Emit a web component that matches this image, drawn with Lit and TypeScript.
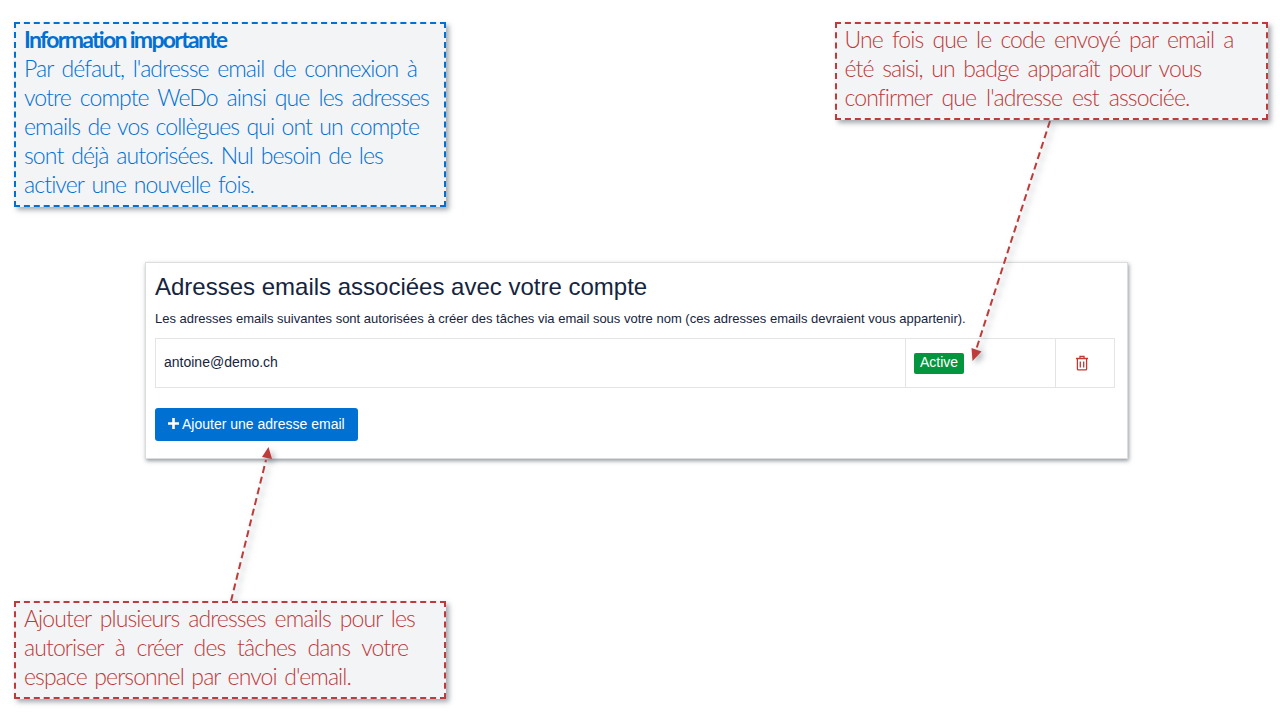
import { LitElement, html, css, svg } from 'lit';
import { customElement, property } from 'lit/decorators.js';

type Line = { text: string; width: number };

@customElement('note-box')
class NoteBox extends LitElement {
  @property() tone = 'red';
  @property() heading = '';
  @property({ type: Array }) lines: Line[] = [];

  static styles = css`
    :host {
      display: block;
      position: absolute;
    }
    .box {
      box-sizing: border-box;
      height: 100%;
      padding: 1px 8px;
      border: 2px dashed;
      background: #f3f4f6;
      box-shadow: 3px 3px 5px rgba(90, 100, 110, 0.55);
      font-family: 'Lato', sans-serif;
      font-size: 23px;
      font-weight: 300;
      line-height: 29px;
      letter-spacing: -0.9px;
      white-space: nowrap;
    }
    .blue {
      border-color: #0070d2;
      color: #0070d2;
    }
    .red {
      border-color: #bd3b3b;
      color: #bd3b3b;
    }
    .line {
      display: block;
      text-align: justify;
      text-align-last: justify;
      white-space: normal;
    }
    .heading {
      font-weight: 700;
      letter-spacing: -1.7px;
      white-space: nowrap;
      text-align-last: auto;
    }
  `;

  render() {
    return html`<div class="box ${this.tone}">
      ${this.heading ? html`<span class="line heading">${this.heading}</span>` : ''}
      ${this.lines.map(l => html`<span class="line" style="width:${l.width}px">${l.text}</span>`)}
    </div>`;
  }
}

@customElement('app-root')
class AppRoot extends LitElement {
  static styles = css`
    :host {
      display: block;
      position: relative;
      width: 1280px;
      height: 720px;
      overflow: hidden;
      background: #fff;
      font-family: 'Liberation Sans', Arial, sans-serif;
    }
    .page {
      padding: 262px 152px 0 145px;
    }
    .card {
      box-sizing: border-box;
      height: 197px;
      padding: 9px 12px 0 9px;
      border: 1px solid #dddddd;
      background: #fff;
      box-shadow: 1px 2px 4px rgba(80, 90, 100, 0.6);
    }
    h2 {
      margin: 0;
      font-size: 24px;
      font-weight: 400;
      line-height: 30px;
      color: #16243d;
    }
    .desc {
      margin: 8px 0 0;
      font-size: 13px;
      line-height: 18px;
      color: #16243d;
    }
    .row {
      display: grid;
      grid-template-columns: 749px 150px 59px;
      height: 50px;
      margin-top: 10px;
      box-sizing: border-box;
      border: 1px solid #e4e4e4;
      color: #16243d;
      font-size: 14px;
    }
    .cell {
      display: flex;
      align-items: center;
      padding-left: 8px;
    }
    .cell + .cell {
      border-left: 1px solid #e4e4e4;
    }
    .email {
      padding-bottom: 2px;
    }
    .icon-cell {
      padding-left: 19px;
    }
    .badge {
      display: inline-block;
      padding: 0 6px;
      height: 21px;
      line-height: 19px;
      border-radius: 2px;
      background: #04963f;
      color: #fff;
      font-size: 14px;
    }
    .add {
      display: flex;
      align-items: center;
      gap: 3px;
      height: 33px;
      margin-top: 20px;
      padding: 0 13px 2px;
      border: 0;
      border-radius: 3px;
      background: #0070d2;
      color: #fff;
      font-family: inherit;
      font-size: 14px;
    }
    .arrows {
      position: absolute;
      inset: 0;
      pointer-events: none;
      filter: drop-shadow(3px 3px 3px rgba(90, 100, 110, 0.55));
    }
  `;

  render() {
    return html`
      <div class="page">
        <section class="card">
          <h2>Adresses emails associées avec votre compte</h2>
          <p class="desc">Les adresses emails suivantes sont autorisées à créer des tâches via email sous votre nom (ces adresses emails devraient vous appartenir).</p>
          <div class="row">
            <div class="cell email">antoine@demo.ch</div>
            <div class="cell"><span class="badge">Active</span></div>
            <div class="cell icon-cell">
              <svg width="14" height="16" viewBox="0 0 14 16" fill="none" stroke="#c23934" stroke-width="1.3">
                <path d="M1 3.5h12M5 3.3V1.4h4v1.9M2.4 3.5v10.4c0 .6.4 1 1 1h7.200c.6 0 1-.4 1-1V3.500M5.300 6.500v6M8.700 6.500v6" />
              </svg>
            </div>
          </div>
          <button class="add">
            <svg width="11" height="11" viewBox="0 0 11 11" fill="#fff"><path d="M4.200 0h2.600v4.200H11v2.600H6.800V11H4.200V6.800H0V4.200h4.200z" /></svg>
            Ajouter une adresse email
          </button>
        </section>
      </div>

      <svg class="arrows" width="1280" height="720" viewBox="0 0 1280 720">
        ${svg`
          <g fill="none" stroke="#bd3b3b" stroke-width="2" stroke-dasharray="7 4">
            <path d="M1050 121L976 350" />
            <path d="M231 601L266 460" />
          </g>
          <path d="M972.500 361L971.500 348L981.500 351.500z" fill="#bd3b3b" />
          <path d="M268.500 447L272 459L262 457z" fill="#bd3b3b" />
        `}
      </svg>

      <note-box
        tone="blue"
        heading="Information importante"
        style="left:14px;top:22px;width:432px;height:185px"
        .lines=${[
          { text: "Par défaut, l'adresse email de connexion à", width: 393 },
          { text: 'votre compte WeDo ainsi que les adresses', width: 405 },
          { text: 'emails de vos collègues qui ont un compte', width: 395 },
          { text: 'sont déjà autorisées. Nul besoin de les', width: 359 },
          { text: 'activer une nouvelle fois.', width: 230 },
        ]}
      ></note-box>
      <note-box
        style="left:834.500px;top:22px;width:433px;height:98px"
        .lines=${[
          { text: 'Une fois que le code envoyé par email a', width: 389 },
          { text: 'été saisi, un badge apparaît pour vous', width: 357 },
          { text: "confirmer que l'adresse est associée.", width: 345 },
        ]}
      ></note-box>
      <note-box
        style="left:14px;top:601px;width:432px;height:98px"
        .lines=${[
          { text: 'Ajouter plusieurs adresses emails pour les', width: 391 },
          { text: 'autoriser à créer des tâches dans votre', width: 384 },
          { text: "espace personnel par envoi d'email.", width: 327 },
        ]}
      ></note-box>
    `;
  }
}
